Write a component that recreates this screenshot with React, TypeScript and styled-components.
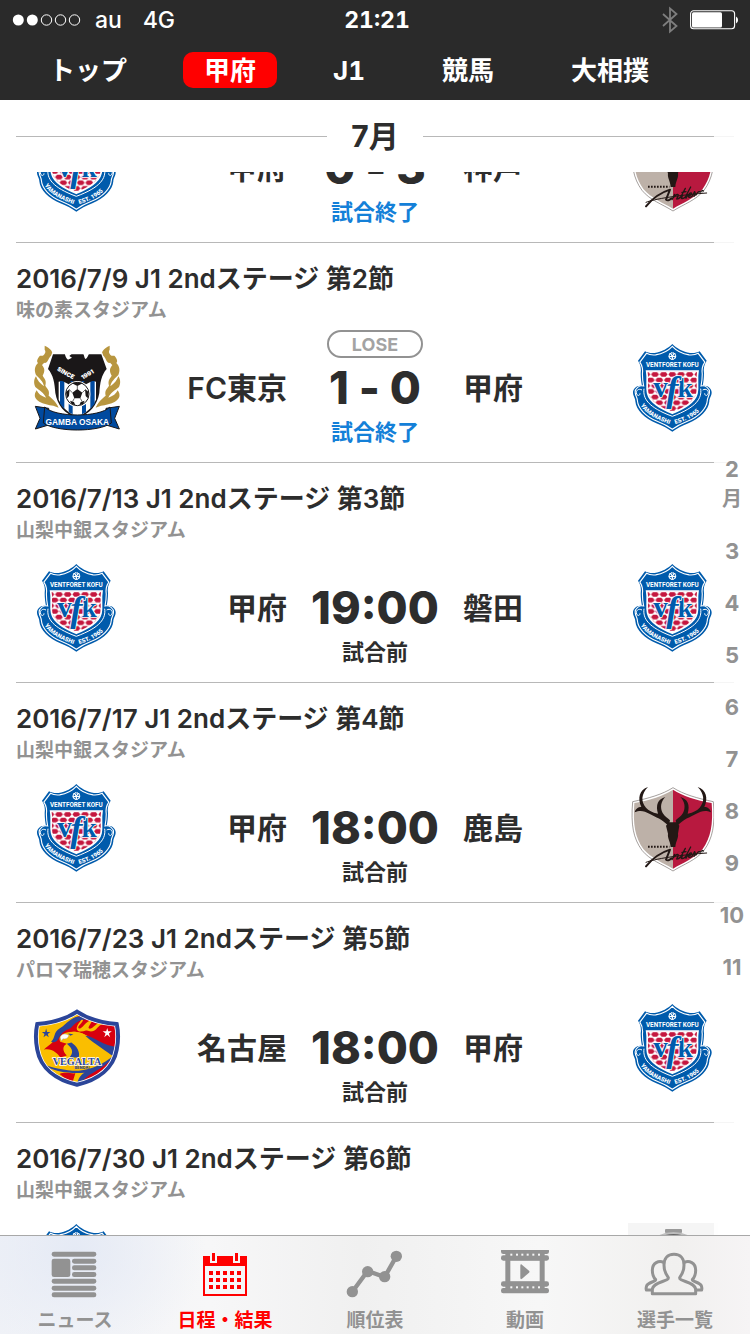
import React, { useLayoutEffect, useRef } from "react";
import styled, { createGlobalStyle } from "styled-components";

const ink = "#2d2d2d";
const muted = "#929292";
const red = "#ff0000";

const GlobalStyle = createGlobalStyle`
  * { box-sizing: border-box; }
  body {
    margin: 0;
    background: #fff;
    color: ${ink};
    font-family: Inter, "Noto Sans CJK JP", sans-serif;
  }
  h1, h2, h3, p, ol { margin: 0; padding: 0; }
  button { font: inherit; border: 0; cursor: pointer; }
`;

const Screen = styled.div`
  display: flex;
  flex-direction: column;
  height: 100vh;
`;

/* ---------- header ---------- */

const Header = styled.header`
  background: #2a2a2a;
  color: #fff;
  font-variant-numeric: tabular-nums;
`;

const StatusBar = styled.div`
  display: grid;
  grid-template-columns: 1fr auto 1fr;
  align-items: center;
  height: 40px;
  padding: 0 10px 0 12px;
  font-size: 23px;
  font-weight: 500;
`;

const Carrier = styled.div`
  display: flex;
  align-items: center;
`;

const CarrierName = styled.span`
  padding: 0 21px 0 14px;
`;

const Clock = styled.time`
  padding-left: 2px;
  font-weight: 700;
`;

const StatusIcons = styled.div`
  display: flex;
  align-items: center;
  justify-content: flex-end;
  gap: 12px;
`;

const Nav = styled.nav`
  display: flex;
  align-items: flex-start;
  gap: 35px;
  height: 60px;
  padding: 12px 28px 0;
  overflow: hidden;
`;

const NavButton = styled.button<{ $active?: boolean }>`
  flex: none;
  height: 36px;
  padding: 2px 21px 0;
  border-radius: 10px;
  background: ${(p) => (p.$active ? red : "transparent")};
  color: #fff;
  font-size: 26px;
  font-weight: 700;
  font-variant-numeric: tabular-nums;
  line-height: 34px;
`;

/* ---------- schedule ---------- */

const Body = styled.div`
  position: relative;
  display: flex;
  flex: 1;
  flex-direction: column;
  min-height: 0;
`;

const MonthHeader = styled.div`
  display: flex;
  flex: none;
  align-items: center;
  gap: 24px;
  height: 72px;
  padding: 0 16px;
`;

const Month = styled.h1`
  padding-bottom: 4px;
  font-size: 30px;
  font-weight: 700;
`;

const Rule = styled.span`
  flex: 1;
  height: 1px;
  background: #b8b8b8;
`;

const Schedule = styled.main`
  flex: 1;
  min-height: 0;
  padding: 0 16px;
  overflow-y: auto;
  scrollbar-width: none;
`;

const MatchRow = styled.article`
  height: 220px;
  padding-top: 20px;
  border-bottom: 1px solid #b8b8b8;
`;

const MatchTitle = styled.h2`
  font-size: 26px;
  font-weight: 600;
  line-height: 32px;
  white-space: nowrap;
`;

const Stadium = styled.p`
  padding-top: 2px;
  color: ${muted};
  font-size: 19px;
  font-weight: 600;
  line-height: 28px;
`;

const Versus = styled.div`
  display: grid;
  grid-template-columns: 90px 1fr 176px 1fr 90px;
  align-items: center;
  padding: 5px 16px 0;
`;

const Team = styled.h3<{ $side: "home" | "away" }>`
  padding-bottom: 4px;
  font-size: 30px;
  font-weight: 600;
  white-space: nowrap;
  text-align: ${(p) => (p.$side === "home" ? "right" : "left")};
`;

const Result = styled.div`
  display: flex;
  flex-direction: column;
  align-items: center;
`;

const BadgeSlot = styled.div`
  height: 28px;
`;

const Badge = styled.span`
  display: block;
  width: 96px;
  height: 28px;
  border: 2px solid #929292;
  border-radius: 14px;
  color: #a3a3a3;
  font-size: 18px;
  font-weight: 700;
  line-height: 25px;
  text-align: center;
`;

const Score = styled.p<{ $final?: boolean }>`
  font-size: 45px;
  font-weight: 800;
  font-variant-ligatures: ${(p) => (p.$final ? "no-contextual" : "normal")};
  line-height: 60px;
  white-space: nowrap;
`;

const State = styled.p<{ $done?: boolean }>`
  color: ${(p) => (p.$done ? "#1480d8" : ink)};
  font-size: 22px;
  font-weight: 600;
  line-height: 28px;
`;

const MonthIndex = styled.ol`
  position: absolute;
  top: 0;
  right: 0;
  bottom: 0;
  z-index: 1;
  display: flex;
  flex-direction: column;
  align-items: center;
  justify-content: center;
  width: 36px;
  background: rgba(255, 255, 255, 0.86);
  list-style: none;
`;

const IndexButton = styled.button`
  display: flex;
  flex-direction: column;
  align-items: center;
  padding: 12px 0 10px;
  background: transparent;
  color: ${muted};
  font-size: 22px;
  font-weight: 700;
  line-height: 30px;
`;

const IndexUnit = styled.span`
  font-size: 20px;
`;

/* ---------- tab bar ---------- */

const TabBar = styled.nav`
  position: relative;
  z-index: 2;
  display: flex;
  flex: none;
  height: 99px;
  border-top: 1px solid #a8a8a8;
  background:
    radial-gradient(ellipse 130px 110px at 10% 15%, #e5eaf5, rgba(240, 242, 247, 0)),
    linear-gradient(90deg, #f0f2f7 0%, #f7f7f8 28%, #f0f0f0 48%, #f7f7f7 72%, #f1f0ef 90%, #f6f4f5 100%);
`;

const Tab = styled.button<{ $active?: boolean }>`
  display: flex;
  flex: 1;
  flex-direction: column;
  align-items: center;
  gap: 11px;
  padding: 14px 0 0;
  background: transparent;
  color: ${(p) => (p.$active ? red : muted)};
  font-size: 19px;
  font-weight: 600;
  line-height: 24px;
  white-space: nowrap;
`;

/* ---------- status icons ---------- */

const SignalDots = () => (
  <svg width="69" height="14" viewBox="0 0 69 14" fill="none" stroke="#fff" aria-hidden="true">
    <circle cx="6.3" cy="7" r="5.5" fill="#fff" stroke="none" />
    <circle cx="20.3" cy="7" r="5.5" fill="#fff" stroke="none" />
    <circle cx="34.5" cy="7" r="5.2" />
    <circle cx="48.5" cy="7" r="5.2" />
    <circle cx="62.5" cy="7" r="5.2" />
  </svg>
);

const BluetoothIcon = () => (
  <svg width="16" height="28" viewBox="0 0 16 28" fill="none" stroke="#7e7e7e" strokeWidth="1.8" aria-hidden="true">
    <path d="M1 8 L14.5 20 L8 25.6 V2.4 L14.5 8 L1 20" />
  </svg>
);

const BatteryIcon = () => (
  <svg width="50" height="20" viewBox="0 0 50 20" aria-hidden="true">
    <rect x="0.6" y="0.8" width="44" height="18" rx="3" fill="none" stroke="#fff" strokeWidth="1.1" />
    <rect x="2" y="2.2" width="30" height="15.2" rx="1.5" fill="#fff" />
    <path d="M46 6.5 a4 4 0 0 1 0 7Z" fill="#fff" />
  </svg>
);

/* ---------- club crests ---------- */

const Crest = styled.svg`
  display: block;
  width: 90px;
  height: 90px;
`;

const kofuShield =
  "M157 42C168 54 190 66 210 69C222 70 232 68 239 64L260 92C252 104 250 116 252 130C252 145 250 158 248 168C262 164 276 176 275 188C274 200 268 204 268 214C266 240 240 266 205 280C185 288 170 296 157 305C144 296 129 288 109 280C74 266 48 240 46 214C46 204 40 200 39 188C38 176 52 164 66 168C64 158 62 145 62 130C64 116 62 104 54 92L75 64C82 68 92 70 104 69C124 66 146 54 157 42Z";

const KofuCrest = () => (
  <Crest viewBox="24 39 270 270" role="img" aria-label="ヴァンフォーレ甲府">
    <defs>
      <pattern id="kofu-check" width="26" height="34" patternUnits="userSpaceOnUse" x="144" y="124">
        <rect width="26" height="34" fill="#fff" />
        <path d="M1 9 L7 2 H19 L25 9 L19 16 H7Z" fill="#c4173f" />
        <path d="M-12 26 L-6 19 H6 L12 26 L6 33 H-6Z M14 26 L20 19 H32 L38 26 L32 33 H20Z" fill="#c4173f" />
      </pattern>
      <path id="kofu-left" d="M62 226 C78 254 114 270 158 286" />
      <path id="kofu-right" d="M166 282 C205 270 236 254 252 226" />
    </defs>
    <path d={kofuShield} fill="#005bac" />
    <g transform="translate(157 172) scale(0.945) translate(-157 -172)">
      <path d={kofuShield} fill="#005bac" stroke="#fff" strokeWidth="3.500" />
    </g>
    <path
      d="M80 123 H234 C229 150 236 166 231 190 C225 217 192 234 157 250 C122 234 89 217 83 190 C78 166 85 150 80 123Z"
      fill="url(#kofu-check)"
      stroke="#fff"
      strokeWidth="5"
    />
    <path d="M72 176 C68 205 84 232 157 259 C230 232 246 205 242 176" fill="none" stroke="#fff" strokeWidth="3" />
    <path
      d="M66 180 C56 174 46 182 50 192 C54 200 60 196 60 190 M248 180 C258 174 268 182 264 192 C260 200 254 196 254 190"
      fill="none"
      stroke="#fff"
      strokeWidth="3"
    />
    <g fill="none" stroke="#fff" strokeWidth="3">
      {[0, 72, 144, 216, 288].map((a) => (
        <path key={a} d="M157 77 L151 71 Q153 66 157 69 Q161 66 163 71Z" transform={`rotate(${a} 157 78)`} />
      ))}
    </g>
    <text x="157" y="112" textAnchor="middle" fontFamily="Liberation Sans Narrow, Roboto" fontWeight="700" fontSize="19" fill="#fff">
      VENTFORET KOFU
    </text>
    <g
      textAnchor="middle"
      fontFamily="Liberation Serif"
      fontWeight="700"
      fill="#005bac"
      stroke="#fff"
      strokeWidth="5"
      paintOrder="stroke"
    >
      <text x="122" y="201" fontSize="88">v</text>
      <text x="195" y="201" fontSize="82">k</text>
      <text x="157" y="213" fontSize="110" fontStyle="italic">f</text>
    </g>
    <g fontFamily="Roboto" fontWeight="900" fontSize="18" fill="#fff">
      <text>
        <textPath href="#kofu-left">YAMANASHI</textPath>
      </text>
      <text>
        <textPath href="#kofu-right">EST. 1965</textPath>
      </text>
    </g>
  </Crest>
);

const GambaCrest = () => (
  <Crest viewBox="0 0 270 270" role="img" aria-label="ガンバ大阪">
    <defs>
      <path id="gamba-since" d="M74 82 L124 110" />
      <path id="gamba-year" d="M152 110 L206 78" />
      <path id="gamba-laurel" d="M38 8 C56 16 66 28 58 38 C48 44 50 58 38 60 C28 54 26 46 30 40 C36 36 44 28 38 20Z M36 38 C42 48 40 58 30 66 C38 76 40 84 32 98 C38 108 44 112 40 128 C46 138 54 142 50 158 C60 166 72 176 80 194 L64 188 C50 186 34 182 22 176 C8 168 4 156 14 142 C18 152 28 160 42 164 C36 150 22 142 10 132 C4 120 6 108 12 100 C16 112 24 122 36 130 C34 116 22 106 12 96 C6 82 8 70 18 60 C12 54 18 44 24 38Z" />
    </defs>
    <use href="#gamba-laurel" fill="#b8963f" />
    <use href="#gamba-laurel" fill="#b8963f" transform="translate(271 0) scale(-1 1)" />
    <path d="M60 30 H211 L228 80 C212 96 208 120 206 150 C200 190 178 218 136 232 C92 218 72 190 66 150 C64 120 60 96 44 80Z" fill="#fff" />
    <path d="M63 34 H208 L224 78 C208 96 204 120 202 150 C196 186 174 212 136 226 C96 212 76 186 70 150 C68 120 64 96 48 78Z" fill="#1a1718" />
    <path d="M80 116 L104 112 L136 136 L168 112 L192 116 V170 C180 196 160 212 136 220 C112 212 92 196 80 170Z" fill="#fff" />
    <path d="M84 114 H97 V198 L84 182Z M110 114 H122 V214 L110 208Z M150 114 H162 V208 L150 214Z M175 114 H188 V182 L175 198Z" fill="#004a9f" />
    <path d="M84 110 L104 106 L136 132 L168 106 L188 110 L162 124 L136 142 L110 124Z" fill="#1a1718" />
    <path d="M98 30 H122 L112 39 L120 44 L108 50 C102 46 100 40 98 30Z M152 30 H172 C168 38 166 46 160 48 C156 44 158 38 152 30Z" fill="#fff" />
    <circle cx="136" cy="153" r="39" fill="#fff" />
    <circle cx="136" cy="153" r="35" fill="#fff" stroke="#1a1718" strokeWidth="3" />
    <path d="M136 138 L151 149 L145 166 H127 L121 149Z M120 121 Q136 114 152 121 L136 129Z M102 147 L113 138 L111 159 L105 166Z M170 147 L159 138 L161 159 L167 166Z M114 173 L126 177 L130 187 L119 183Z M158 173 L146 177 L142 187 L153 183Z" fill="#1a1718" />
    <path d="M136 129 V138 M151 149 L159 141 M145 166 L150 175 M127 166 L122 175 M121 149 L113 141" stroke="#1a1718" strokeWidth="2" />
    <g fontFamily="Inter" fontWeight="900" fontSize="18" fill="#fff">
      <text>
        <textPath href="#gamba-since">SINCE</textPath>
      </text>
      <text>
        <textPath href="#gamba-year">1991</textPath>
      </text>
    </g>
    <g fill="#004a9f" stroke="#1a1718" strokeWidth="3">
      <path d="M10 190 L50 196 V246 L10 258 L24 226Z M262 190 L222 196 V246 L262 258 L248 226Z" />
      <path d="M38 192 C70 224 202 224 234 192 L238 240 C200 268 72 268 34 240Z" />
    </g>
    <text x="136" y="247" textAnchor="middle" fontFamily="Liberation Sans" fontWeight="700" fontSize="25" fill="#fff">
      GAMBA OSAKA
    </text>
  </Crest>
);

const kashimaShield =
  "M159 38C190 58 232 70 280 80C286 150 278 190 252 226C228 256 190 268 159 288C128 268 90 256 66 226C40 190 32 150 38 80C86 70 128 58 159 38Z";

const KashimaCrest = () => (
  <Crest viewBox="24 24 270 270" role="img" aria-label="鹿島アントラーズ">
    <path d={kashimaShield} fill="#fff" stroke="#77706c" strokeWidth="2" />
    <path d="M159 44C130 63 90 75 43 84C38 150 46 188 70 222C94 250 130 264 159 281Z" fill="#bdb1a8" />
    <path d="M159 44C188 63 228 75 275 84C280 150 272 188 248 222C224 250 188 264 159 281Z" fill="#b8193f" />
    <g fill="#231815">
      <path id="kashima-antler" d="M84 36 C58 44 52 70 64 96 C54 96 46 102 44 112 C60 104 74 108 88 116 C108 128 126 130 146 154 L150 136 C142 128 134 124 128 114 C120 98 122 80 136 66 C114 72 106 90 114 116 C96 112 86 106 78 98 C62 80 64 56 84 36Z" />
      <use href="#kashima-antler" transform="translate(317 0) scale(-1 1)" />
      <path d="M148 142 H170 L178 152 L174 176 C176 190 168 196 166 216 H152 C150 196 142 190 144 176 L138 152Z" />
    </g>
    <path d="M84 215 H148" stroke="#231815" strokeWidth="6" strokeDasharray="5 4" />
    <g fill="none" stroke="#231815" strokeLinecap="round" strokeLinejoin="round">
      <path d="M78 274 C96 252 124 232 150 224 L138 254 C142 258 148 256 154 250" strokeWidth="6" />
      <path d="M78 262 C100 252 180 240 260 234" strokeWidth="3" />
      <path
        d="M156 254 L164 238 M160 248 Q172 234 175 240 L170 252 Q176 252 182 246 L196 220 M186 232 L198 230 M188 240 L184 250 Q190 252 196 246 L212 216 M202 238 L198 250 M204 244 Q216 240 214 234 Q208 232 204 244 Q206 250 216 244 L224 230 Q228 236 222 244 M228 240 Q234 228 238 230 M240 232 Q248 224 250 228"
        strokeWidth="4"
      />
    </g>
  </Crest>
);

const vegaltaShield =
  "M135 24C165 44 205 58 256 62C260 80 262 110 256 140C246 196 200 232 135 247C70 232 24 196 14 140C8 110 10 80 14 62C65 58 105 44 135 24Z";

const VegaltaCrest = () => (
  <Crest viewBox="-2 -2 274 274" role="img" aria-label="ベガルタ仙台">
    <defs>
      <clipPath id="vegalta-body">
        <path d={vegaltaShield} />
      </clipPath>
    </defs>
    <g clipPath="url(#vegalta-body)">
      <rect width="270" height="270" fill="#fabe00" />
      <path d="M34 140 C50 124 68 118 70 100 C70 84 96 76 110 58 C122 46 134 38 150 36 C180 48 220 58 262 64 V140 C226 138 196 122 176 104 C158 90 130 80 104 88 C84 94 78 104 84 116 L104 122 C92 128 88 142 104 158 L84 164 C76 150 56 134 34 140Z" fill="#d7000f" />
      <path d="M56 116 C72 102 60 88 84 74 C104 62 116 38 150 38 L180 48 C146 44 132 56 116 74 C98 82 90 86 80 104 C76 118 62 120 56 116Z" fill="#2b4599" />
      <path d="M148 50 C158 46 152 56 142 66 C134 76 142 80 152 70 C164 58 168 52 180 52 C178 62 166 72 172 76 C182 78 190 64 200 60 L214 62 C198 66 196 82 182 84 C172 86 170 80 162 82 C150 86 134 88 134 74 C136 64 142 58 148 50Z" fill="#fabe00" />
      <path d="M96 94 C120 80 150 84 172 104 C192 124 220 144 246 156 L214 182 H110 C124 160 130 136 112 122 L86 112Z" fill="#fabe00" />
      <path d="M160 98 C188 98 214 132 262 132 L250 164 C226 146 190 124 160 98Z" fill="#2b4599" />
      <path d="M104 122 C124 138 124 150 112 164 H140 C146 148 134 128 118 118Z M26 182 C60 196 112 206 140 204 C180 200 214 186 246 158 L226 206 C200 222 160 226 134 246 C140 226 146 216 158 210 C120 214 60 208 26 182Z" fill="#2b4599" />
      <path d="M148 246 C160 214 200 208 238 172 L220 216Z M82 214 C100 206 116 214 130 212 L120 244Z" fill="#d7000f" />
      <path d="M84 104 C86 92 98 90 110 96 C108 106 100 108 92 107 L88 114Z" fill="#fff" stroke="#8a8fa8" />
      <path d="M108 91 L124 93 L115 98Z" fill="#2b4599" />
    </g>
    <path d={vegaltaShield} fill="none" stroke="#fff" strokeWidth="17" clipPath="url(#vegalta-body)" />
    <path d={vegaltaShield} fill="none" stroke="#2b4599" strokeWidth="12" />
    <path d="M41 76 L44 86 L54 86 L46 92 L49 102 L41 96 L33 102 L36 92 L28 86 L38 86Z" fill="#2b4599" />
    <path d="M227 74 L230 84 L241 84 L232 91 L236 102 L227 95 L218 102 L222 91 L213 84 L224 84Z" fill="#fff" />
    <text
      x="135"
      y="186"
      textAnchor="middle"
      fontFamily="Liberation Serif"
      fontWeight="700"
      fontSize="31"
      fill="#2b4599"
      stroke="#fff"
      strokeWidth="4"
      paintOrder="stroke"
    >
      VEGALTA
    </text>
    <text x="150" y="198" textAnchor="middle" fontFamily="Inter" fontWeight="800" fontSize="12" fill="#2b4599">
      SENDAI
    </text>
  </Crest>
);

const BlankCrest = () => (
  <Crest viewBox="0 0 90 90" role="img" aria-label="クラブ未定">
    <rect width="90" height="90" fill="#f5f5f5" />
    <rect x="37" y="6" width="17" height="4" rx="1" fill="#999" />
    <circle cx="45.500" cy="42" r="32" fill="#666" stroke="#bdbdbd" strokeWidth="2" />
  </Crest>
);

/* ---------- tab icons ---------- */

const TabIcon = ({ x, children }: { x: number; children: React.ReactNode }) => (
  <svg width="64" height="48" viewBox={`${x} 105 192 144`} fill="currentColor" aria-hidden="true">
    {children}
  </svg>
);

const NewsIcon = () => (
  <TabIcon x={129}>
    <rect x="155" y="110" width="134" height="15" rx="7" />
    <rect x="155" y="131" width="56" height="55" rx="7" />
    {[131, 151, 171].map((y) => (
      <rect key={y} x="216" y={y} width="73" height="15" rx="7" />
    ))}
    {[191, 212, 232].map((y) => (
      <rect key={y} x="155" y={y} width="134" height="15" rx="7" />
    ))}
  </TabIcon>
);

const CalendarIcon = () => (
  <TabIcon x={579}>
    <path d="M609 123 H630 V144 H651 V123 H699 V144 H720 V123 H741 V243 H609Z M615 153 V237 H735 V153Z" fillRule="evenodd" />
    <rect x="636" y="114" width="9" height="24" />
    <rect x="705" y="114" width="9" height="24" />
    {[168, 189, 210].map((y) =>
      [627, 648, 669, 690, 711].map((x) => <rect key={`${x}-${y}`} x={x} y={y} width="12" height="12" />)
    )}
  </TabIcon>
);

const ChartIcon = () => (
  <TabIcon x={1029}>
    <path d="M1057 230 L1103 168 L1154 186 L1189 124" fill="none" stroke="currentColor" strokeWidth="13" />
    <circle cx="1057" cy="230" r="17" />
    <circle cx="1103" cy="170" r="17" />
    <circle cx="1154" cy="185" r="17" />
    <circle cx="1189" cy="124" r="17" />
  </TabIcon>
);

const VideoIcon = () => (
  <TabIcon x={354}>
    <rect x="378" y="101" width="144" height="16" rx="7" />
    <rect x="378" y="121" width="144" height="16" rx="7" />
    <rect x="378" y="199" width="144" height="16" rx="7" />
    <rect x="378" y="219" width="144" height="16" rx="7" />
    <path d="M391 108 H509 V229 H391Z M406 136 V200 H494 V136Z" fillRule="evenodd" />
    <g fill="#f6f6f6">
      {[406, 423, 439, 455, 472, 489].map((x) => (
        <g key={x}>
          <rect x={x} y="116" width="6" height="6" />
          <rect x={x} y="214" width="6" height="6" />
        </g>
      ))}
    </g>
    <path d="M439 148 Q436 146 436 152 V188 Q436 195 441 191 L462 173 Q465 170 462 167Z" />
  </TabIcon>
);

const MembersIcon = () => (
  <TabIcon x={804}>
    <g fill="none" stroke="currentColor" strokeWidth="9" strokeLinejoin="round">
      <path d="M866 142 C852 136 832 142 832 166 C832 180 838 190 842 194 C842 200 820 202 815 212 C812 220 814 224 814 225 H832" />
      <path d="M928 142 C942 136 962 142 962 166 C962 180 956 190 952 194 C952 200 974 202 979 212 C982 220 980 224 980 225 H962" />
      <path d="M897 118 C876 118 867 132 867 150 C867 168 874 180 880 188 C882 200 832 200 832 224 V236 H962 V224 C962 200 912 200 914 188 C920 180 927 168 927 150 C927 132 918 118 897 118Z" />
    </g>
  </TabIcon>
);

/* ---------- data ---------- */

type Match = {
  title: string;
  stadium: string;
  home: string;
  away: string;
  HomeCrest: React.FC;
  AwayCrest: React.FC;
  score: string;
  badge?: string;
  done?: boolean;
};

const matches: Match[] = [
  { title: "2016/7/2 J1 2ndステージ 第1節", stadium: "山梨中銀スタジアム", home: "甲府", away: "神戸", HomeCrest: KofuCrest, AwayCrest: KashimaCrest, score: "0 - 3", badge: "LOSE", done: true },
  { title: "2016/7/9 J1 2ndステージ 第2節", stadium: "味の素スタジアム", home: "FC東京", away: "甲府", HomeCrest: GambaCrest, AwayCrest: KofuCrest, score: "1 - 0", badge: "LOSE", done: true },
  { title: "2016/7/13 J1 2ndステージ 第3節", stadium: "山梨中銀スタジアム", home: "甲府", away: "磐田", HomeCrest: KofuCrest, AwayCrest: KofuCrest, score: "19:00" },
  { title: "2016/7/17 J1 2ndステージ 第4節", stadium: "山梨中銀スタジアム", home: "甲府", away: "鹿島", HomeCrest: KofuCrest, AwayCrest: KashimaCrest, score: "18:00" },
  { title: "2016/7/23 J1 2ndステージ 第5節", stadium: "パロマ瑞穂スタジアム", home: "名古屋", away: "甲府", HomeCrest: VegaltaCrest, AwayCrest: KofuCrest, score: "18:00" },
  { title: "2016/7/30 J1 2ndステージ 第6節", stadium: "山梨中銀スタジアム", home: "甲府", away: "未定", HomeCrest: KofuCrest, AwayCrest: BlankCrest, score: "18:00" },
];

const navItems = ["トップ", "甲府", "J1", "競馬", "大相撲"];
const months = [2, 3, 4, 5, 6, 7, 8, 9, 10, 11];
const tabs = [
  { label: "ニュース", Icon: NewsIcon },
  { label: "日程・結果", Icon: CalendarIcon },
  { label: "順位表", Icon: ChartIcon },
  { label: "動画", Icon: VideoIcon },
  { label: "選手一覧", Icon: MembersIcon },
];

export default function App() {
  const schedule = useRef<HTMLElement>(null);

  useLayoutEffect(() => {
    if (schedule.current) schedule.current.scrollTop = 149;
  }, []);

  return (
    <Screen>
      <GlobalStyle />
      <Header>
        <StatusBar>
          <Carrier>
            <SignalDots />
            <CarrierName>au</CarrierName>
            <span>4G</span>
          </Carrier>
          <Clock>21:21</Clock>
          <StatusIcons>
            <BluetoothIcon />
            <BatteryIcon />
          </StatusIcons>
        </StatusBar>
        <Nav>
          {navItems.map((item) => (
            <NavButton key={item} $active={item === "甲府"}>
              {item}
            </NavButton>
          ))}
        </Nav>
      </Header>
      <Body>
        <MonthHeader>
          <Rule />
          <Month>7月</Month>
          <Rule />
        </MonthHeader>
        <Schedule ref={schedule}>
          {matches.map(({ HomeCrest, AwayCrest, ...m }) => (
            <MatchRow key={m.title}>
              <MatchTitle>{m.title}</MatchTitle>
              <Stadium>{m.stadium}</Stadium>
              <Versus>
                <HomeCrest />
                <Team $side="home">{m.home}</Team>
                <Result>
                  <BadgeSlot>{m.badge && <Badge>{m.badge}</Badge>}</BadgeSlot>
                  <Score $final={m.done}>{m.score}</Score>
                  <State $done={m.done}>{m.done ? "試合終了" : "試合前"}</State>
                </Result>
                <Team $side="away">{m.away}</Team>
                <AwayCrest />
              </Versus>
            </MatchRow>
          ))}
        </Schedule>
        <MonthIndex>
          {months.map((month, i) => (
            <li key={month}>
              <IndexButton>
                {month}
                {i === 0 && <IndexUnit>月</IndexUnit>}
              </IndexButton>
            </li>
          ))}
        </MonthIndex>
        <TabBar>
          {tabs.map(({ label, Icon }) => (
            <Tab key={label} $active={label === "日程・結果"}>
              <Icon />
              {label}
            </Tab>
          ))}
        </TabBar>
      </Body>
    </Screen>
  );
}
